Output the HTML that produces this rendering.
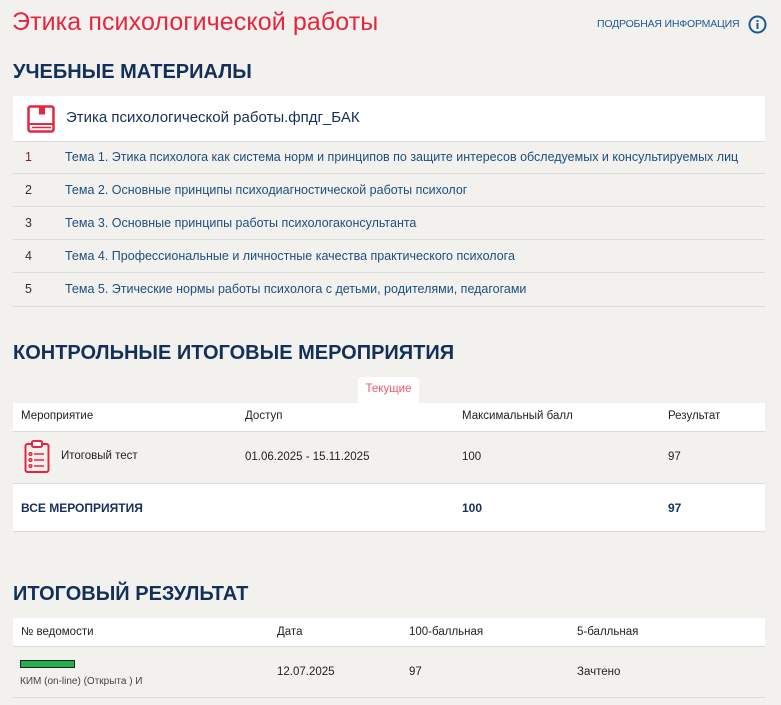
<!DOCTYPE html>
<html><head><meta charset="utf-8"><style>
body{margin:0;background:#f2f1ee;font-family:"Liberation Sans",sans-serif;width:781px;height:705px;overflow:hidden;position:relative;color:#333}
.a{position:absolute;white-space:nowrap}
h1{position:absolute;left:12px;top:8px;margin:0;font-weight:normal;font-size:25px;color:#e8253f;letter-spacing:0.1px}
h2{position:absolute;left:13px;margin:0;font-size:20px;font-weight:bold;color:#13305a}
.link{position:absolute;left:597px;top:18px;font-size:10.5px;color:#1d5a95;letter-spacing:-0.2px}
.w{position:absolute;left:13px;width:752px;background:#fff}
.row{position:absolute;left:13px;width:752px;border-bottom:1px solid #dcdcdc;font-size:12.5px}
.row span{position:absolute;top:9px}
.t{font-size:11.5px;color:#222}
</style></head><body>
<h1>Этика психологической работы</h1>
<div class="link">ПОДРОБНАЯ ИНФОРМАЦИЯ</div>
<svg class="a" style="left:748px;top:15px" width="19" height="19"><circle cx="9.5" cy="9.5" r="8" fill="none" stroke="#1d5a95" stroke-width="2"/><rect x="8.5" y="8" width="2" height="6" fill="#1d5a95"/><rect x="8.5" y="5" width="2" height="2" fill="#1d5a95"/></svg>
<h2 style="top:61px">УЧЕБНЫЕ МАТЕРИАЛЫ</h2>
<div class="w" style="top:96px;height:45px;border-bottom:1px solid #dcdcdc"></div>
<svg class="a" style="left:27px;top:105px" width="28" height="28"><rect x="1.5" y="1.5" width="25" height="25" rx="2" fill="none" stroke="#e8253f" stroke-width="2.5"/><rect x="12" y="1.5" width="6" height="8" fill="#e8253f"/><line x1="2" y1="19" x2="26" y2="19" stroke="#e8253f" stroke-width="2"/><line x1="5" y1="22.5" x2="24" y2="22.5" stroke="#e8253f" stroke-width="1.5"/></svg>
<div class="a" style="left:66px;top:109px;font-size:15px;color:#13305a">Этика психологической работы.фпдг_БАК</div>
<div class="row" style="top:141px;height:32px"><span style="left:12px;color:#8a1c1c">1</span><span style="left:52px;color:#1d4f80">Тема 1. Этика психолога как система норм и принципов по защите интересов обследуемых и консультируемых лиц</span></div>
<div class="row" style="top:174px;height:32px"><span style="left:12px">2</span><span style="left:52px;color:#1d4f80">Тема 2. Основные принципы психодиагностической работы психолог</span></div>
<div class="row" style="top:207px;height:32px"><span style="left:12px">3</span><span style="left:52px;color:#1d4f80">Тема 3. Основные принципы работы психологаконсультанта</span></div>
<div class="row" style="top:240px;height:32px"><span style="left:12px">4</span><span style="left:52px;color:#1d4f80">Тема 4. Профессиональные и личностные качества практического психолога</span></div>
<div class="row" style="top:273px;height:33px"><span style="left:12px">5</span><span style="left:52px;color:#1d4f80">Тема 5. Этические нормы работы психолога с детьми, родителями, педагогами</span></div>
<h2 style="top:342px">КОНТРОЛЬНЫЕ ИТОГОВЫЕ МЕРОПРИЯТИЯ</h2>
<div class="a" style="left:358px;top:377px;width:61px;height:26px;background:#fff;border-radius:4px 4px 0 0;font-size:11.5px;color:#f05a6a;text-align:center;line-height:24px">Текущие</div>
<div class="w" style="top:403px;height:28px;border-bottom:1px solid #dcdcdc"></div>
<div class="a t" style="left:21px;top:410px">Мероприятие</div><div class="a t" style="left:245px;top:410px">Доступ</div><div class="a t" style="left:462px;top:410px">Максимальный балл</div><div class="a t" style="left:668px;top:410px">Результат</div>
<div class="a" style="left:13px;top:432px;width:752px;height:51px;border-bottom:1px solid #dcdcdc"></div>
<svg class="a" style="left:24px;top:440px" width="26" height="34"><rect x="1.5" y="4" width="23" height="28" rx="2" fill="none" stroke="#e8253f" stroke-width="2"/><rect x="8" y="1" width="10" height="6" rx="1.5" fill="#fff" stroke="#e8253f" stroke-width="2"/><g stroke="#e8253f" stroke-width="1.5" fill="none"><circle cx="6.5" cy="14" r="1.3"/><circle cx="6.5" cy="20" r="1.3"/><circle cx="6.5" cy="26" r="1.3"/><line x1="10" y1="14" x2="20" y2="14"/><line x1="10" y1="20" x2="20" y2="20"/><line x1="10" y1="26" x2="20" y2="26"/></g></svg>
<div class="a t" style="left:61px;top:450px">Итоговый тест</div><div class="a t" style="left:245px;top:451px">01.06.2025 - 15.11.2025</div><div class="a t" style="left:462px;top:451px">100</div><div class="a t" style="left:668px;top:451px">97</div>
<div class="w" style="top:484px;height:47px;border-bottom:1px solid #dcdcdc"></div>
<div class="a" style="left:21px;top:501px;font-size:12px;font-weight:bold;color:#13305a">ВСЕ МЕРОПРИЯТИЯ</div><div class="a" style="left:462px;top:501px;font-size:12px;font-weight:bold;color:#13305a">100</div><div class="a" style="left:668px;top:501px;font-size:12px;font-weight:bold;color:#13305a">97</div>
<h2 style="top:583px">ИТОГОВЫЙ РЕЗУЛЬТАТ</h2>
<div class="w" style="top:618px;height:28px;border-bottom:1px solid #dcdcdc"></div>
<div class="a t" style="left:21px;top:626px">№ ведомости</div><div class="a t" style="left:277px;top:626px">Дата</div><div class="a t" style="left:409px;top:626px">100-балльная</div><div class="a t" style="left:577px;top:626px">5-балльная</div>
<div class="a" style="left:13px;top:647px;width:752px;height:50px;border-bottom:1px solid #dcdcdc"></div>
<div class="a" style="left:20px;top:660px;width:53px;height:6px;background:#22b04b;border:1px solid #222"></div>
<div class="a" style="left:20px;top:676px;font-size:10px;color:#444">КИМ (on-line) (Открыта ) И</div>
<div class="a t" style="left:277px;top:666px">12.07.2025</div><div class="a t" style="left:409px;top:666px">97</div><div class="a t" style="left:577px;top:666px">Зачтено</div>
</body></html>
